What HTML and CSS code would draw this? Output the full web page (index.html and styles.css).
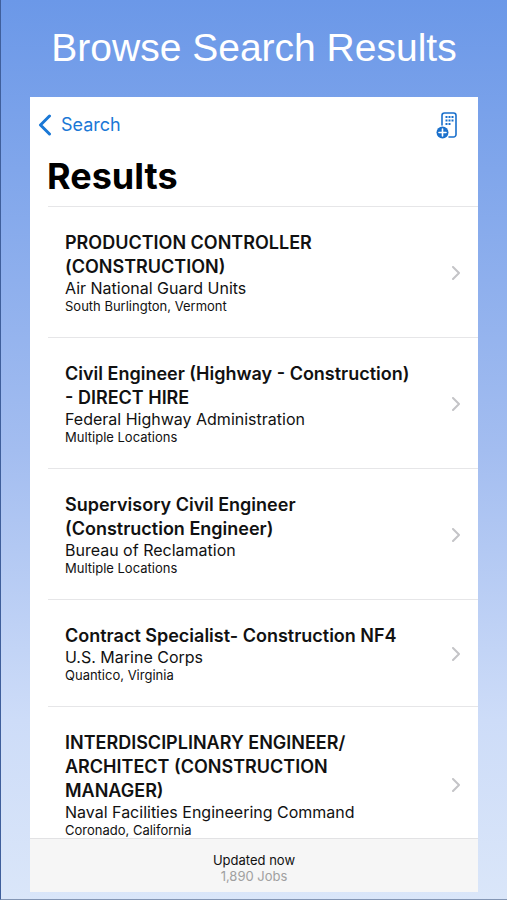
FILE: index.html
```html
<!DOCTYPE html>
<html lang="en">
<head>
  <meta charset="UTF-8" />
  <meta name="viewport" content="width=device-width, initial-scale=1.0"/>
  <title>Browse Search Results</title>
  <link rel="stylesheet" href="styles.css">
</head>
<body>
  <h1 class="headline">Browse Search Results</h1>

  <main class="screen">
    <header class="top">
      <nav class="navbar">
        <a class="back" href="#search">
          <svg width="14" height="22" viewBox="0 0 14 22" fill="none" stroke="currentColor" stroke-width="3" stroke-linecap="round" stroke-linejoin="round"><path d="M11.5 2L2.5 11l9 9"/></svg>
          Search
        </a>
        <button class="save" type="button" aria-label="Save search">
          <svg width="22" height="28" viewBox="0 0 22 28" fill="none">
            <path d="M6 14V4.500a2.500 2.500 0 0 1 2.500-2.500h9a2.500 2.500 0 0 1 2.500 2.500v19a2.500 2.500 0 0 1-2.500 2.500H13" stroke="currentColor" stroke-width="1.600" stroke-linecap="round"/>
            <path d="M9.500 6h8M9.500 9.500h8M9.500 13h5" stroke="currentColor" stroke-width="2" stroke-dasharray="2 1"/>
            <circle cx="6.500" cy="21.500" r="6" fill="currentColor"/>
            <path d="M6.500 18v7M3 21.500h7" stroke="#fff" stroke-width="1.600" stroke-linecap="round"/>
          </svg>
        </button>
      </nav>
      <h2 class="title">Results</h2>
    </header>

    <ul class="jobs">
      <li>
        <a class="job" href="#job1">
          <span class="info">
            <strong>PRODUCTION CONTROLLER (CONSTRUCTION)</strong>
            <span class="agency">Air National Guard Units</span>
            <small>South Burlington, Vermont</small>
          </span>
          <svg class="arrow" viewBox="0 0 10 14"><path d="M2 1l6 6-6 6"/></svg>
        </a>
      </li>
      <li>
        <a class="job" href="#job2">
          <span class="info">
            <strong>Civil Engineer (Highway - Construction) - DIRECT HIRE</strong>
            <span class="agency">Federal Highway Administration</span>
            <small>Multiple Locations</small>
          </span>
          <svg class="arrow" viewBox="0 0 10 14"><path d="M2 1l6 6-6 6"/></svg>
        </a>
      </li>
      <li>
        <a class="job" href="#job3">
          <span class="info">
            <strong>Supervisory Civil Engineer (Construction Engineer)</strong>
            <span class="agency">Bureau of Reclamation</span>
            <small>Multiple Locations</small>
          </span>
          <svg class="arrow" viewBox="0 0 10 14"><path d="M2 1l6 6-6 6"/></svg>
        </a>
      </li>
      <li>
        <a class="job" href="#job4">
          <span class="info">
            <strong>Contract Specialist- Construction NF4</strong>
            <span class="agency">U.S. Marine Corps</span>
            <small>Quantico, Virginia</small>
          </span>
          <svg class="arrow" viewBox="0 0 10 14"><path d="M2 1l6 6-6 6"/></svg>
        </a>
      </li>
      <li>
        <a class="job" href="#job5">
          <span class="info">
            <strong>INTERDISCIPLINARY ENGINEER/<wbr>ARCHITECT (CONSTRUCTION MANAGER)</strong>
            <span class="agency">Naval Facilities Engineering Command</span>
            <small>Coronado, California</small>
          </span>
          <svg class="arrow" viewBox="0 0 10 14"><path d="M2 1l6 6-6 6"/></svg>
        </a>
      </li>
    </ul>

    <footer class="status">
      <p>Updated now</p>
      <p class="count">1,890 Jobs</p>
    </footer>
  </main>
</body>
</html>
```

FILE: styles.css
```css
*, *::before, *::after { box-sizing: border-box; }

body {
  font-family: Inter, sans-serif;
  background: linear-gradient(#6b98e8, #a3bdf0 50%, #cddcf8 80%, #dae6f9);
  color: #111;
  margin: 0;
  padding: 0 29px 7px;
  display: flex;
  flex-direction: column;
  height: 100vh;
  border-left: 1px solid #3f5f9c;
  border-bottom: 1px solid #8496b4;
}

.headline {
  margin: 0;
  padding: 24px 0 25px;
  font-family: "Liberation Sans", Arial, sans-serif;
  font-size: 39px;
  font-weight: 400;
  line-height: 48px;
  color: #fff;
  text-align: center;
  white-space: nowrap;
}

.screen {
  flex: 1;
  min-height: 0;
  display: flex;
  flex-direction: column;
  background-color: #fff;
}

.navbar {
  display: flex;
  justify-content: space-between;
  align-items: center;
  height: 55px;
  padding: 0 20px 0 8px;
}

.back {
  display: flex;
  align-items: center;
  gap: 9px;
  font-size: 18px;
  color: #1a78d6;
  text-decoration: none;
}

.save {
  display: flex;
  padding: 0;
  border: none;
  background: none;
  color: #1a70cc;
  cursor: pointer;
}

.title {
  margin: 0;
  padding: 4px 17px 10px;
  font-size: 36px;
  font-weight: 700;
  line-height: 40px;
  color: #000;
}

.jobs {
  flex: 1;
  min-height: 0;
  overflow: hidden;
  list-style-type: none;
  margin: 0;
  padding: 0 0 0 18px;
}

.job {
  display: flex;
  align-items: center;
  justify-content: space-between;
  gap: 16px;
  padding: 24px 17px 22px;
  border-top: 1px solid #e6e6e8;
  color: inherit;
  text-decoration: none;
}

.info {
  display: flex;
  flex-direction: column;
  max-width: 354px;
}

.info strong {
  font-size: 18px;
  font-weight: 600;
  line-height: 24px;
}

.agency {
  font-size: 16px;
  line-height: 19px;
}

.info small {
  font-size: 13px;
  line-height: 17px;
}

.arrow {
  flex: none;
  width: 10px;
  height: 14px;
  fill: none;
  stroke: #c4c4c7;
  stroke-width: 2;
  stroke-linecap: round;
  stroke-linejoin: round;
}

.status {
  padding: 13px 0 8px;
  background-color: #f6f6f6;
  border-top: 1px solid #e2e2e4;
  font-size: 13px;
  line-height: 16px;
  text-align: center;
}

.status p {
  margin: 0;
}

.status .count {
  color: #a0a0a0;
}
```
